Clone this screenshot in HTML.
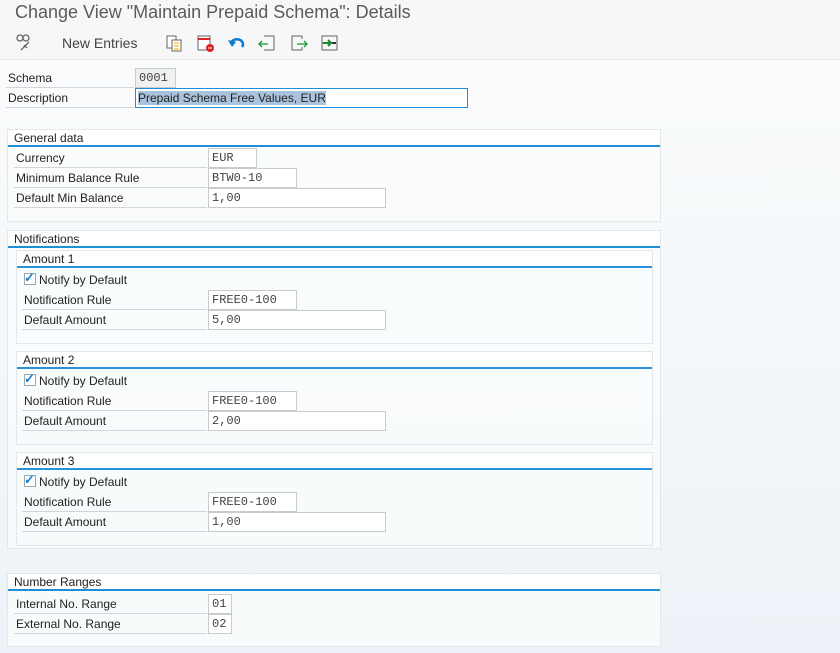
<!DOCTYPE html>
<html><head><meta charset="utf-8"><style>
*{margin:0;padding:0;box-sizing:border-box}
body{width:840px;height:653px;overflow:hidden;font-family:"Liberation Sans",sans-serif;font-size:12px;color:#222;position:relative;
background:linear-gradient(180deg,#fbfcfd 0px,#f9fbfc 110px,#ecf2f7 653px);}
.a{position:absolute}
.hdr{left:0;top:0;width:840px;height:60px;background:#f7f7f7;border-bottom:1px solid #e6e6e6}
.title{left:15px;top:2px;font-size:18px;color:#5b5b5b}
.tb{left:62px;top:35px;font-size:14px;color:#444}
.lbl{height:20px;line-height:21px;border-bottom:1px solid #d2d6da;padding-left:2px;color:#222;white-space:nowrap}
.fld{height:20px;border:1px solid #c9ccce;background:#fff;font-family:"Liberation Mono",monospace;font-size:12px;line-height:19px;padding-left:3px;color:#444}
.grp{border:1px solid #e3e7ea;background:rgba(250,252,253,.8)}
.gh{background:#fff;height:17px;border-bottom:2px solid #1d8fd6;padding-left:6px;line-height:16px}
.sg{border:1px solid #e3e7ea}
.sh{background:#fff;height:17px;border-bottom:2px solid #2a93d8;padding-left:6px;line-height:16px}
.cb{width:12px;height:12px;border:1px solid #9aa;background:#fff}
</style></head><body>
<div class="a hdr"></div>
<div class="a title">Change View "Maintain Prepaid Schema": Details</div>
<svg class="a" style="left:15px;top:33px" width="20" height="20" viewBox="0 0 20 20" fill="none" stroke="#666" stroke-width="1.3"><circle cx="5" cy="5" r="3"/><circle cx="11" cy="5" r="3"/><path d="M6 17l8-8M9 12l3 3"/></svg>
<div class="a tb">New Entries</div>
<svg class="a" style="left:165px;top:34px" width="20" height="18"><rect x="2" y="2" width="9" height="12" fill="#fff" stroke="#666"/><rect x="7" y="6" width="9" height="11" fill="#fff" stroke="#666"/><path d="M9 9h5M9 12h5M9 15h5" stroke="#e8a000"/></svg>
<svg class="a" style="left:196px;top:34px" width="20" height="18"><rect x="2" y="2" width="12" height="14" fill="#fff" stroke="#666"/><path d="M2 5h12" stroke="#d22" stroke-width="2"/><circle cx="14" cy="14" r="4" fill="#d22"/><path d="M12 14h4" stroke="#fff"/></svg>
<svg class="a" style="left:227px;top:34px" width="20" height="18"><path d="M4 10a6 5 0 1 1 11 3" fill="none" stroke="#0a7bd0" stroke-width="2.5"/><path d="M1 6l4 7 4-5z" fill="#0a7bd0"/></svg>
<svg class="a" style="left:258px;top:34px" width="20" height="18"><path d="M6 2h10v14H6" fill="none" stroke="#666"/><path d="M1 10h9M4 7l-3 3 3 3" fill="none" stroke="#1a9a3a" stroke-width="1.3"/></svg>
<svg class="a" style="left:289px;top:34px" width="20" height="18"><path d="M13 5V2H3v14h10v-3" fill="none" stroke="#666"/><path d="M8 10h10M15 7l3 3-3 3" fill="none" stroke="#1a9a3a" stroke-width="1.3"/></svg>
<svg class="a" style="left:320px;top:34px" width="20" height="18"><rect x="2" y="2" width="15" height="14" fill="none" stroke="#666"/><path d="M2 9h5" stroke="#666"/><path d="M3 9h7M8 6l3 3-3 3" fill="none" stroke="#1a8a2a" stroke-width="2"/><path d="M12 9h4" stroke="#333" stroke-width="2"/></svg>

<div class="a lbl" style="left:6px;top:68px;width:128px">Schema</div>
<div class="a fld" style="left:135px;top:68px;width:41px;background:#eef0f1">0001</div>
<div class="a lbl" style="left:6px;top:88px;width:128px">Description</div>
<div class="a fld" style="left:135px;top:88px;width:333px;border-color:#1e8ed8;font-family:'Liberation Sans',sans-serif;padding-left:2px;color:#222"><span style="background:#a9c3dc">Prepaid Schema Free Values, EUR</span></div>

<div class="a grp" style="left:7px;top:129px;width:654px;height:93px"><div class="gh">General data</div></div>
<div class="a lbl" style="left:14px;top:148px;width:193px">Currency</div>
<div class="a fld" style="left:208px;top:148px;width:49px">EUR</div>
<div class="a lbl" style="left:14px;top:168px;width:193px">Minimum Balance Rule</div>
<div class="a fld" style="left:208px;top:168px;width:89px">BTW0-10</div>
<div class="a lbl" style="left:14px;top:188px;width:193px">Default Min Balance</div>
<div class="a fld" style="left:208px;top:188px;width:178px">1,00</div>

<div class="a grp" style="left:7px;top:230px;width:654px;height:319px"><div class="gh">Notifications</div></div>

<div class="a sg" style="left:16px;top:250px;width:637px;height:94px"><div class="sh">Amount 1</div></div>
<div class="a cb" style="left:24px;top:273px"></div><div class="a" style="left:24px;top:270px;color:#1a7fd0;font-size:13px;font-weight:bold">✓</div>
<div class="a" style="left:39px;top:273px">Notify by Default</div>
<div class="a lbl" style="left:22px;top:290px;width:185px">Notification Rule</div>
<div class="a fld" style="left:208px;top:290px;width:89px">FREE0-100</div>
<div class="a lbl" style="left:22px;top:310px;width:185px">Default Amount</div>
<div class="a fld" style="left:208px;top:310px;width:178px">5,00</div>

<div class="a sg" style="left:16px;top:351px;width:637px;height:94px"><div class="sh">Amount 2</div></div>
<div class="a cb" style="left:24px;top:374px"></div><div class="a" style="left:24px;top:371px;color:#1a7fd0;font-size:13px;font-weight:bold">✓</div>
<div class="a" style="left:39px;top:374px">Notify by Default</div>
<div class="a lbl" style="left:22px;top:391px;width:185px">Notification Rule</div>
<div class="a fld" style="left:208px;top:391px;width:89px">FREE0-100</div>
<div class="a lbl" style="left:22px;top:411px;width:185px">Default Amount</div>
<div class="a fld" style="left:208px;top:411px;width:178px">2,00</div>

<div class="a sg" style="left:16px;top:452px;width:637px;height:94px"><div class="sh">Amount 3</div></div>
<div class="a cb" style="left:24px;top:475px"></div><div class="a" style="left:24px;top:472px;color:#1a7fd0;font-size:13px;font-weight:bold">✓</div>
<div class="a" style="left:39px;top:475px">Notify by Default</div>
<div class="a lbl" style="left:22px;top:492px;width:185px">Notification Rule</div>
<div class="a fld" style="left:208px;top:492px;width:89px">FREE0-100</div>
<div class="a lbl" style="left:22px;top:512px;width:185px">Default Amount</div>
<div class="a fld" style="left:208px;top:512px;width:178px">1,00</div>

<div class="a grp" style="left:7px;top:573px;width:654px;height:74px"><div class="gh">Number Ranges</div></div>
<div class="a lbl" style="left:14px;top:594px;width:193px">Internal No. Range</div>
<div class="a fld" style="left:208px;top:594px;width:24px">01</div>
<div class="a lbl" style="left:14px;top:614px;width:193px">External No. Range</div>
<div class="a fld" style="left:208px;top:614px;width:24px">02</div>
</body></html>
